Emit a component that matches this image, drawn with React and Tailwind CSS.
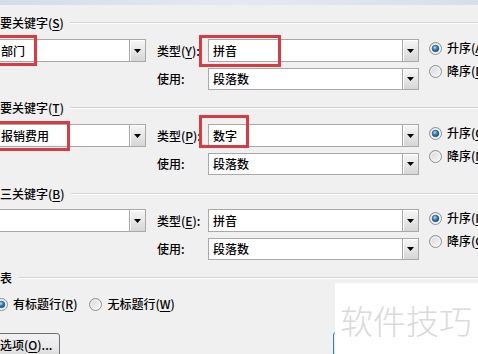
import React, { useId } from "react";

function U({ children }) {
  return <span className="underline underline-offset-[2px] decoration-[1px]">{children}</span>;
}

function Radio({ checked }) {
  const id = useId().replace(/[^a-zA-Z0-9]/g, "");
  return (
    <svg width="13" height="13" viewBox="0 0 13 13" className="shrink-0 block">
      <defs>
        <linearGradient id={`r${id}`} x1="0" y1="0" x2="1" y2="1">
          <stop offset="0" stopColor="#d4d4d4" />
          <stop offset="1" stopColor="#fcfcfc" />
        </linearGradient>
        <radialGradient id={`b${id}`} cx="0.4" cy="0.35" r="0.75">
          <stop offset="0" stopColor="#b5e0fa" />
          <stop offset="0.45" stopColor="#2f84c6" />
          <stop offset="1" stopColor="#0d3c66" />
        </radialGradient>
      </defs>
      <circle cx="6.5" cy="6.5" r="6" fill={`url(#r${id})`} stroke="#8e8f8f" />
      <circle cx="6.5" cy="6.5" r="4.5" fill="none" stroke="#f4f4f4" strokeWidth="1" />
      {checked && (
        <circle cx="6.5" cy="6.5" r="3.3" fill={`url(#b${id})`} stroke="#1b4a75" strokeWidth="0.6" />
      )}
    </svg>
  );
}

function Combo({ className = "", text, pad = "pl-[4px]" }) {
  return (
    <div className={`flex h-full items-stretch border border-[#a9a9a9] bg-white ${className}`}>
      <div className={`flex flex-1 items-center overflow-hidden whitespace-nowrap ${pad}`}>{text}</div>
      <div className="flex w-[16px] shrink-0 items-center justify-center border-l border-[#a6a6a6] bg-gradient-to-b from-[#f7f7f7] to-[#d6d6d6] shadow-[inset_1px_1px_0_#ffffff]">
        <svg width="7" height="4" viewBox="0 0 7 4" className="block">
          <polygon points="0,0 7,0 3.5,4" fill="#000" />
        </svg>
      </div>
    </div>
  );
}

function Heading({ children, className = "" }) {
  return (
    <div className={`flex h-[16px] items-center ${className}`}>
      <span className="whitespace-nowrap leading-[16px]">{children}</span>
      <div className="ml-[6px] h-0 flex-1 border-t border-b border-t-[#d5d5d5] border-b-white" />
    </div>
  );
}

function Section({ heading, leftText, typeLabel, typeText, upLabel, downLabel, headingClass, bodyClass }) {
  return (
    <div className={headingClass}>
      <Heading>{heading}</Heading>
      <div className={`flex ${bodyClass}`}>
        <div className="h-[23px] w-[149px] shrink-0 ml-[-3px]">
          <Combo text={leftText} pad="pl-[3px]" />
        </div>
        <div className="ml-[11px] grid shrink-0 grid-cols-[51px_211px] grid-rows-[23px_22px] gap-y-[6px]">
          <div className="flex items-center whitespace-nowrap">{typeLabel}</div>
          <Combo text={typeText} />
          <div className="flex items-center whitespace-nowrap">使用:</div>
          <Combo text="段落数" />
        </div>
        <div className="ml-[10px] flex shrink-0 flex-col gap-[7px] pt-[1px]">
          <div className="flex h-[16px] items-center gap-[5px] whitespace-nowrap">
            <Radio checked />
            <span>{upLabel}</span>
          </div>
          <div className="flex h-[16px] items-center gap-[5px] whitespace-nowrap">
            <Radio />
            <span>{downLabel}</span>
          </div>
        </div>
      </div>
    </div>
  );
}

export default function App() {
  return (
    <div className="relative h-[354px] w-[478px] overflow-hidden bg-[#f0f0f0] font-['Microsoft_YaHei','Noto_Sans_CJK_SC',sans-serif] text-[12px] leading-[16px] font-medium text-black">
      <div className="h-[5px] bg-gradient-to-r from-[#d3dde8] via-[#e4eaf1] to-[#d6dfe9]" />
      <div className="pt-[10px]">
        <Section
          heading={<>要关键字(<U>S</U>)</>}
          leftText="部门"
          typeLabel={<>类型(<U>Y</U>):</>}
          typeText="拼音"
          upLabel={<>升序(<U>A</U>)</>}
          downLabel={<>降序(<U>D</U>)</>}
          headingClass=""
          bodyClass="mt-[8px]"
        />
        <Section
          heading={<>要关键字(<U>T</U>)</>}
          leftText="报销费用"
          typeLabel={<>类型(<U>P</U>):</>}
          typeText="数字"
          upLabel={<>升序(<U>C</U>)</>}
          downLabel={<>降序(<U>N</U>)</>}
          headingClass="mt-[10px]"
          bodyClass="mt-[8px]"
        />
        <Section
          heading={<>三关键字(<U>B</U>)</>}
          leftText=""
          typeLabel={<>类型(<U>E</U>):</>}
          typeText="拼音"
          upLabel={<>升序(<U>I</U>)</>}
          downLabel={<>降序(<U>G</U>)</>}
          headingClass="mt-[11px]"
          bodyClass="mt-[7px]"
        />
        <Heading className="mt-[10px]">表</Heading>
        <div className="mt-[10px] ml-[-5px] flex h-[16px] items-center whitespace-nowrap">
          <Radio checked />
          <span className="ml-[5px]">有标题行(<U>R</U>)</span>
          <div className="ml-[12px]">
            <Radio />
          </div>
          <span className="ml-[5px]">无标题行(<U>W</U>)</span>
        </div>
        <div className="mt-[21px] flex">
          <div className="ml-[-22px] flex h-[24px] w-[82px] shrink-0 items-center rounded-[3px] border border-[#707070] bg-gradient-to-b from-[#f2f2f2] via-[#ebebeb] to-[#dcdcdc] pl-[21px] whitespace-nowrap">
            选项(<U>O</U>)...
          </div>
          <div className="ml-[273px] mt-[-1px] h-[26px] w-[80px] shrink-0 rounded-[3px] border border-[#3c7fb1] bg-gradient-to-b from-[#eaf6fd] to-[#bee6fd]" />
        </div>
      </div>

      {/* red highlight boxes */}
      <div className="absolute left-[-3px] top-[35px] h-[31px] w-[40px] border-[3px] border-[#d63c42]" />
      <div className="absolute left-[199px] top-[35px] h-[32px] w-[82px] border-[3px] border-[#d63c42]" />
      <div className="absolute left-[-3px] top-[121px] h-[30px] w-[73px] border-[3px] border-[#d63c42]" />
      <div className="absolute left-[199px] top-[115px] h-[33px] w-[50px] border-[3px] border-[#d63c42]" />

      {/* watermark */}
      <div className="absolute left-[335px] top-[283px] right-0 bottom-0 bg-white">
        <div className="ml-[5px] mt-[19px] text-[33px] leading-[36px] font-light text-[#dadada] whitespace-nowrap">
          软件技巧
        </div>
      </div>
    </div>
  );
}
